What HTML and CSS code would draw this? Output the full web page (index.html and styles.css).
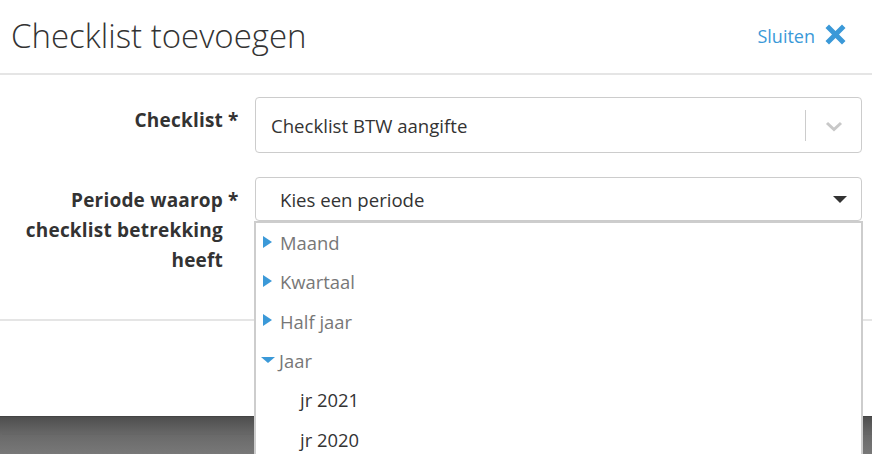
FILE: index.html
```html
<!DOCTYPE html>
<html lang="nl">
<head>
<meta charset="utf-8">
<title>Checklist toevoegen</title>
<link rel="stylesheet" href="styles.css">
</head>
<body>
<div class="page">
  <div class="modal">
    <div class="modal-header">
      <h1 class="title">Checklist toevoegen</h1>
      <a class="close" href="#">Sluiten
        <svg class="close-icon" viewBox="0 0 21 21" width="21" height="21"><path d="M4 0.5 L10.5 7 L17 0.5 L20.5 4 L14 10.5 L20.5 17 L17 20.5 L10.5 14 L4 20.5 L0.5 17 L7 10.5 L0.5 4 Z"/></svg>
      </a>
    </div>
    <div class="modal-body">
      <div class="form-row">
        <div class="label"><span class="label-text">Checklist</span><span class="req">*</span></div>
        <div class="control">
          <div class="select select-lg">
            <span class="select-value">Checklist BTW aangifte</span>
            <span class="sep"></span>
            <span class="chev"><svg viewBox="0 0 18 11" width="18" height="11"><path d="M2 2 L9 8.5 L16 2" fill="none" stroke="#c8c8c8" stroke-width="3"/></svg></span>
          </div>
        </div>
      </div>
      <div class="form-row">
        <div class="label"><span class="label-text">Periode waarop checklist betrekking heeft</span><span class="req">*</span></div>
        <div class="control">
          <div class="select select-sm">
            <span class="select-value pad">Kies een periode</span>
            <span class="caret"></span>
          </div>
        </div>
      </div>
    </div>
    <div class="modal-footer"></div>
  </div>
  <div class="backdrop"><div class="backdrop-line"></div></div>

  <ul class="dropdown">
    <li class="item"><span class="tri-right"></span>Maand</li>
    <li class="item"><span class="tri-right"></span>Kwartaal</li>
    <li class="item"><span class="tri-right"></span>Half jaar</li>
    <li class="item"><span class="tri-down"></span>Jaar</li>
    <li class="item child">jr 2021</li>
    <li class="item child">jr 2020</li>
  </ul>
</div>
</body>
</html>
```
FILE: styles.css
```css
html, body {
  margin: 0;
  padding: 0;
  width: 872px;
  height: 454px;
  overflow: hidden;
  background: #fff;
  font-family: "Open Sans", "Liberation Sans", sans-serif;
  color: #333;
}

.page {
  position: relative;
  width: 872px;
  height: 454px;
  overflow: hidden;
}

.modal {
  background: #fff;
}

.modal-header {
  height: 73px;
  border-bottom: 2px solid #e5e5e5;
  display: flex;
  align-items: center;
  justify-content: space-between;
  padding: 0 26px 0 11px;
}

.title {
  margin: 0;
  font-weight: 300;
  font-size: 33px;
  color: #333;
  line-height: 1;
  padding-bottom: 2px;
}

.close {
  display: flex;
  align-items: center;
  gap: 10px;
  color: #3b99d8;
  text-decoration: none;
  font-size: 18px;
  padding-bottom: 2px;
}

.close-icon {
  fill: #3b99d8;
  display: block;
  margin-top: -2px;
}

.modal-body {
  padding: 22px 10px 44px 0;
  border-bottom: 2px solid #e5e5e5;
  display: flex;
  flex-direction: column;
  gap: 24px;
}

.form-row {
  display: flex;
  align-items: flex-start;
}

.label {
  width: 240px;
  flex: none;
  display: flex;
  justify-content: flex-end;
  padding-top: 8px;
  font-weight: 700;
  font-size: 19px;
  letter-spacing: 0.2px;
  line-height: 30px;
  color: #333;
}

.label-text {
  width: 223px;
  text-align: right;
}

.req {
  width: 17px;
  padding-left: 5px;
  box-sizing: border-box;
  font-weight: 700;
}

.control {
  flex: 1;
  margin-left: 15px;
}

.select {
  border: 1px solid #ccc;
  border-radius: 4px;
  display: flex;
  align-items: center;
  box-sizing: border-box;
  font-size: 18.6px;
  color: #333;
}

.select-lg {
  height: 56px;
  padding-left: 15px;
}

.select-sm {
  height: 44px;
  padding-left: 24px;
  padding-right: 14px;
}

.select-value {
  flex: 1;
}

.sep {
  width: 1px;
  height: 31px;
  background: #ccc;
}

.chev {
  width: 55px;
  display: flex;
  justify-content: center;
  align-items: center;
  padding-top: 2px;
}

.chev svg {
  display: block;
}

.caret {
  width: 0;
  height: 0;
  border-left: 7px solid transparent;
  border-right: 7px solid transparent;
  border-top: 7px solid #333;
}

.modal-footer {
  height: 95px;
}

.backdrop {
  height: 38px;
  border-top: 1px solid #444;
  background: linear-gradient(#4e4e4e, #6a6a6a 50%, #787878);
  padding-top: 16px;
  box-sizing: border-box;
}

.backdrop-line {
  height: 2px;
  margin-left: 2px;
  background: #666;
}

.dropdown {
  position: absolute;
  left: 254px;
  top: 221px;
  width: 609px;
  height: 260px;
  margin: 0;
  padding: 0;
  list-style: none;
  background: #fff;
  border: 2px solid #cdcdcd;
  border-bottom: none;
  box-sizing: border-box;
}

.item {
  height: 39.3px;
  display: flex;
  align-items: center;
  padding-left: 7px;
  font-size: 18.4px;
  color: #777;
}

.tri-right {
  width: 0;
  height: 0;
  border-top: 6px solid transparent;
  border-bottom: 6px solid transparent;
  border-left: 9px solid #3b99d8;
  margin-right: 8px;
  margin-top: -2px;
}

.tri-down {
  width: 0;
  height: 0;
  border-left: 7px solid transparent;
  border-right: 7px solid transparent;
  border-top: 6px solid #3b99d8;
  margin-left: -2px;
  margin-right: 4px;
  margin-top: -2px;
}

.child {
  padding-left: 44px;
  color: #333;
}
```
